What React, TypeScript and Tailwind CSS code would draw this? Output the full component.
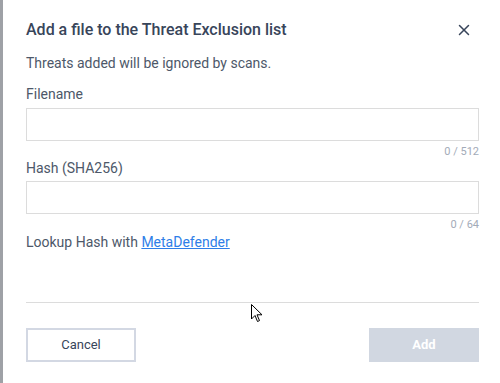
import { X } from 'lucide-react'

export default function App() {
  return (
    <div className="flex h-[383px] w-[500px] bg-white font-['Roboto',sans-serif]">
      <div className="w-[3px] bg-[#9ea1a6]" />
      <div className="relative flex flex-1 flex-col pl-[23px] pr-[21px] pt-[18px]">
        <div className="flex items-center justify-between">
          <h2 className="text-[16px] leading-[24px] font-medium text-[#38455a]">
            Add a file to the Threat Exclusion list
          </h2>
          <button className="mr-[6px] text-[#38455a]">
            <X size={18} strokeWidth={2} />
          </button>
        </div>

        <p className="mt-[11px] text-[14px] leading-[20px] text-[#4d5869]">
          Threats added will be ignored by scans.
        </p>

        <label className="mt-[11px] text-[14px] leading-[20px] text-[#4d5869]">Filename</label>
        <input className="mt-[4px] h-[33px] w-full border border-[#dcdcdc] outline-none" />
        <div className="mt-[4px] text-right text-[11px] leading-[13px] text-[#a3abb8]">0 / 512</div>

        <label className="text-[14px] leading-[20px] text-[#4d5869]">Hash (SHA256)</label>
        <input className="mt-[3px] h-[33px] w-full border border-[#dcdcdc] outline-none" />
        <div className="mt-[4px] text-right text-[11px] leading-[14px] text-[#a3abb8]">0 / 64</div>

        <p className="text-[14px] leading-[20px] text-[#4d5869]">
          Lookup Hash with{' '}
          <a href="#" className="text-[#2e7ee8] underline">
            MetaDefender
          </a>
        </p>

        <div className="mt-[50px] h-px w-full bg-[#dcdcdc]" />

        <div className="mt-[25px] flex justify-between">
          <button className="h-[34px] w-[110px] border-2 border-[#d3d8e3] text-[13px] text-[#38455a]">
            Cancel
          </button>
          <button className="h-[34px] w-[110px] bg-[#d1d7e1] text-[13px] font-bold text-white">
            Add
          </button>
        </div>

        <svg
          className="absolute left-[248px] top-[304px]"
          width="12"
          height="19"
          viewBox="0 0 12 19"
        >
          <path
            d="M0.5 0.5 L0.5 15 L4 11.5 L6.5 17.5 L8.5 16.6 L6 10.8 L11 10.8 Z"
            fill="white"
            stroke="black"
            strokeWidth="1"
            strokeLinejoin="round"
          />
        </svg>
      </div>
    </div>
  )
}
